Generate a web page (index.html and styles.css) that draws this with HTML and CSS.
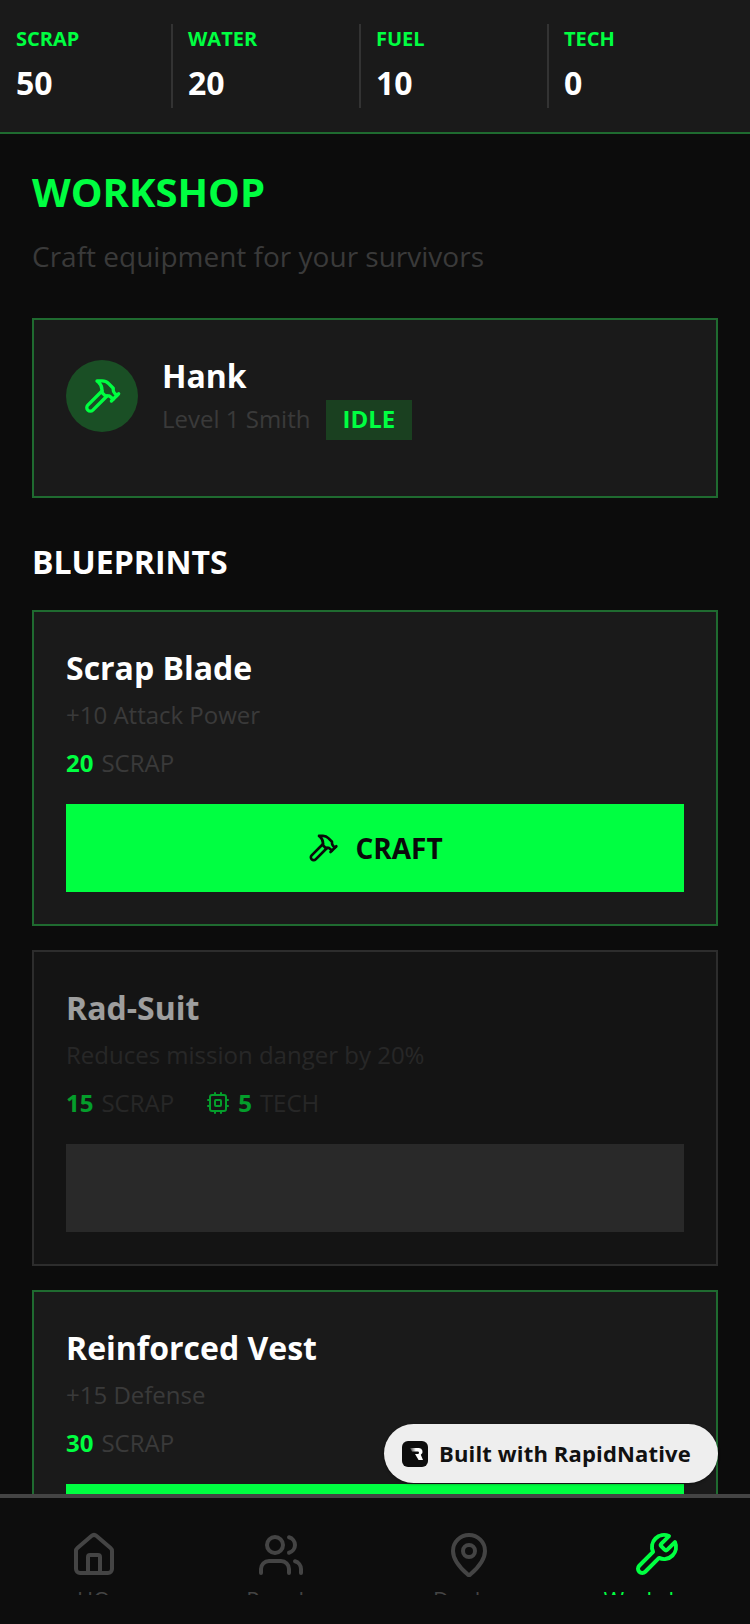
FILE: index.html
```html
<!DOCTYPE html>
<html lang="en">
<head>
  <meta charset="UTF-8">
  <title>Workshop</title>
  <link rel="stylesheet" href="styles.css">
</head>
<body>
  <div id="app">
    <!-- Resources -->
    <div class="stats">
      <div class="stat"><div class="stat-label">SCRAP</div><div class="stat-value">50</div></div>
      <div class="stat"><div class="stat-label">WATER</div><div class="stat-value">20</div></div>
      <div class="stat"><div class="stat-label">FUEL</div><div class="stat-value">10</div></div>
      <div class="stat"><div class="stat-label">TECH</div><div class="stat-value">0</div></div>
    </div>

    <div class="content">
      <h1>WORKSHOP</h1>
      <p class="subtitle">Craft equipment for your survivors</p>

      <div class="card smith">
        <div class="avatar">
          <svg class="icon icon-40" viewBox="0 0 24 24"><path d="m15 12-8.5 8.5c-.83.83-2.17.83-3 0a2.12 2.12 0 0 1 0-3L12 9"/><path d="M17.64 15 22 10.64"/><path d="m20.91 11.7-1.25-1.25c-.6-.6-.93-1.4-.93-2.25v-.86L16.01 4.6a5.56 5.56 0 0 0-3.94-1.64H9l.92.82A6.18 6.18 0 0 1 12 8.4v1.56l2 2h2.47l2.26 1.91"/></svg>
        </div>
        <div>
          <div class="smith-name">Hank</div>
          <div class="smith-meta">
            <span class="dim">Level 1 Smith</span>
            <span class="badge">IDLE</span>
          </div>
        </div>
      </div>

      <h2>BLUEPRINTS</h2>

      <div class="card blueprint">
        <div class="bp-name">Scrap Blade</div>
        <div class="bp-desc">+10 Attack Power</div>
        <div class="costs">
          <div class="cost"><b>20</b> SCRAP</div>
        </div>
        <button class="craft-btn">
          <svg class="icon icon-32" viewBox="0 0 24 24"><path d="m15 12-8.5 8.5c-.83.83-2.17.83-3 0a2.12 2.12 0 0 1 0-3L12 9"/><path d="M17.64 15 22 10.64"/><path d="m20.91 11.7-1.25-1.25c-.6-.6-.93-1.4-.93-2.25v-.86L16.01 4.6a5.56 5.56 0 0 0-3.94-1.64H9l.92.82A6.18 6.18 0 0 1 12 8.4v1.56l2 2h2.47l2.26 1.91"/></svg>
          CRAFT
        </button>
      </div>

      <div class="card blueprint locked">
        <div class="bp-name">Rad-Suit</div>
        <div class="bp-desc">Reduces mission danger by 20%</div>
        <div class="costs">
          <div class="cost"><b>15</b> SCRAP</div>
          <div class="cost">
            <svg class="icon icon-24 cpu" viewBox="0 0 24 24"><rect x="4" y="4" width="16" height="16" rx="2"/><rect x="9" y="9" width="6" height="6" rx="1"/><path d="M15 2v2M15 20v2M2 15h2M2 9h2M20 15h2M20 9h2M9 2v2M9 20v2"/></svg>
            <b>5</b> TECH
          </div>
        </div>
        <button class="craft-btn"></button>
      </div>

      <div class="card blueprint">
        <div class="bp-name">Reinforced Vest</div>
        <div class="bp-desc">+15 Defense</div>
        <div class="costs">
          <div class="cost"><b>30</b> SCRAP</div>
        </div>
        <button class="craft-btn"></button>
      </div>
    </div>

    <div class="built-with">
      <svg class="logo" viewBox="0 0 26 26">
        <defs><linearGradient id="logoFade" x1="0" x2="1" y1="0" y2="0"><stop offset="0" stop-color="#333"/><stop offset="0.45" stop-color="#fff"/></linearGradient></defs>
        <rect width="26" height="26" rx="6" fill="#0d0d0d"/>
        <path d="M8 7h9a3.6 3.6 0 0 1 1.8 6.7l2.2 5.3h-4.4l-3.6-6h2.8a1 1 0 0 0 0-2.4H10z" fill="url(#logoFade)"/>
      </svg>
      <span class="built-text">Built with RapidNative</span>
    </div>

    <div class="nav">
      <div class="nav-item">
        <svg class="icon icon-48" viewBox="0 0 24 24"><path d="M15 21v-8a1 1 0 0 0-1-1h-4a1 1 0 0 0-1 1v8"/><path d="M3 10a2 2 0 0 1 .709-1.528l7-5.999a2 2 0 0 1 2.582 0l7 5.999A2 2 0 0 1 21 10v9a2 2 0 0 1-2 2H5a2 2 0 0 1-2-2z"/></svg>
        <div class="nav-label">HQ</div>
      </div>
      <div class="nav-item">
        <svg class="icon icon-48" viewBox="0 0 24 24"><path d="M16 21v-2a4 4 0 0 0-4-4H6a4 4 0 0 0-4 4v2"/><path d="M16 3.128a4 4 0 0 1 0 7.744"/><path d="M22 21v-2a4 4 0 0 0-3-3.87"/><circle cx="9" cy="7" r="4"/></svg>
        <div class="nav-label">People</div>
      </div>
      <div class="nav-item">
        <svg class="icon icon-48" viewBox="0 0 24 24"><path d="M20 10c0 4.993-5.539 10.193-7.399 11.799a1 1 0 0 1-1.202 0C9.539 20.193 4 14.993 4 10a8 8 0 0 1 16 0"/><circle cx="12" cy="10" r="3"/></svg>
        <div class="nav-label">Deploy</div>
      </div>
      <div class="nav-item active">
        <svg class="icon icon-48" viewBox="0 0 24 24"><path d="M14.7 6.3a1 1 0 0 0 0 1.4l1.6 1.6a1 1 0 0 0 1.4 0l3.77-3.77a6 6 0 0 1-7.94 7.94l-6.91 6.91a2.12 2.12 0 0 1-3-3l6.91-6.91a6 6 0 0 1 7.94-7.94l-3.76 3.76z"/></svg>
        <div class="nav-label">Workshop</div>
      </div>
    </div>
  </div>
</body>
</html>
```

FILE: styles.css
```css
* {
  box-sizing: border-box;
}
body {
  margin: 0;
  background-color: #0c0c0c;
  color: #fff;
  font-family: "Open Sans", "Noto Sans", sans-serif;
}
#app {
  position: relative;
  display: flex;
  flex-direction: column;
  width: 750px;
  height: 1624px;
  overflow: hidden;
}
.icon {
  fill: none;
  stroke: currentColor;
  stroke-width: 2;
  stroke-linecap: round;
  stroke-linejoin: round;
  flex-shrink: 0;
}
.icon-24 { width: 24px; height: 24px; }
.icon-32 { width: 32px; height: 32px; }
.icon-40 { width: 40px; height: 40px; }
.icon-48 { width: 48px; height: 48px; }

/* Resource bar */
.stats {
  display: grid;
  grid-template-columns: 155px 188px 188px 1fr;
  flex-shrink: 0;
  height: 134px;
  padding: 24px 0 24px 16px;
  background-color: #1a1a1a;
  border-bottom: 2px solid #1f6b30;
}
.stat {
  padding-left: 15px;
  border-left: 2px solid #333;
}
.stat:first-child {
  padding-left: 0;
  border-left: none;
}
.stat-label {
  margin-top: 1px;
  font-size: 20px;
  line-height: 27px;
  font-weight: 700;
  color: #00ff41;
}
.stat-value {
  margin-top: 9px;
  font-size: 32px;
  line-height: 44px;
  font-weight: 700;
}

/* Main area */
.content {
  flex: 1;
  min-height: 0;
  overflow: hidden;
  padding: 35px 32px 32px;
}
h1 {
  margin: 0;
  font-size: 40px;
  line-height: 46px;
  font-weight: 700;
  color: #00ff41;
}
.subtitle {
  margin: 22px 0 43px;
  font-size: 28px;
  line-height: 38px;
  color: #3a3a3a;
}
h2 {
  margin: 42px 0 26px;
  font-size: 32px;
  line-height: 44px;
  font-weight: 700;
}
.card {
  background-color: #1a1a1a;
  border: 2px solid #1f6b30;
}
.smith {
  display: flex;
  align-items: flex-start;
  gap: 24px;
  height: 180px;
  padding: 32px;
}
.avatar {
  display: flex;
  align-items: center;
  justify-content: center;
  width: 72px;
  height: 72px;
  margin-top: 8px;
  border-radius: 50%;
  background-color: #1a4f25;
  color: #00ff41;
}
.smith-name {
  margin-top: 2px;
  font-size: 32px;
  line-height: 44px;
  font-weight: 700;
}
.smith-meta {
  display: flex;
  align-items: center;
  gap: 16px;
  margin-top: 2px;
}
.dim {
  margin-bottom: 4px;
  font-size: 24px;
  color: #3a3a3a;
}
.badge {
  height: 40px;
  padding: 0 17px 0 16px;
  background-color: #1a4020;
  font-size: 24px;
  line-height: 38px;
  font-weight: 700;
  color: #00ff41;
}

/* Blueprints */
.blueprint {
  height: 316px;
  margin-bottom: 24px;
  padding: 32px;
}
.bp-name {
  margin-top: 2px;
  font-size: 32px;
  line-height: 44px;
  font-weight: 700;
}
.bp-desc {
  margin-top: 8px;
  font-size: 24px;
  line-height: 33px;
  color: #3a3a3a;
}
.costs {
  display: flex;
  gap: 32px;
  margin-top: 15px;
  margin-bottom: 25px;
}
.cost {
  display: flex;
  align-items: center;
  gap: 8px;
  font-size: 24px;
  line-height: 33px;
  color: #3a3a3a;
}
.cost b {
  font-weight: 700;
  color: #00ff41;
}
.cpu {
  color: #00ff41;
}
.craft-btn {
  display: flex;
  align-items: center;
  justify-content: center;
  gap: 16px;
  width: 100%;
  height: 88px;
  border: none;
  border-radius: 0;
  background-color: #00ff41;
  font-family: inherit;
  font-size: 28px;
  font-weight: 700;
  color: #0a0a0a;
}
.locked {
  border-color: #444;
  opacity: 0.6;
}
.locked .craft-btn {
  background-color: #3d3d3d;
}

/* Floating badge */
.built-with {
  position: absolute;
  left: 384px;
  top: 1424px;
  display: flex;
  align-items: center;
  gap: 11px;
  width: 334px;
  height: 59px;
  padding-left: 18px;
  border-radius: 30px;
  background-color: #eee;
  box-shadow: 0 1px 3px rgba(0, 0, 0, 0.4);
  font-size: 22px;
  font-weight: 700;
  letter-spacing: 0.15px;
  color: #111;
}
.built-text {
  margin-bottom: 2px;
}
.logo {
  width: 26px;
  height: 26px;
}

/* Bottom tabs */
.nav {
  display: flex;
  flex-shrink: 0;
  height: 130px;
  background-color: #0d0d0d;
  border-top: 4px solid #444;
}
.nav-item {
  display: flex;
  flex: 1;
  flex-direction: column;
  align-items: center;
  height: 97px;
  overflow: hidden;
  padding-top: 33px;
  color: #444;
}
.nav-item.active {
  color: #00ff41;
}
.nav-label {
  margin-top: 5px;
  font-size: 22px;
  line-height: 30px;
  font-weight: 500;
}
```
